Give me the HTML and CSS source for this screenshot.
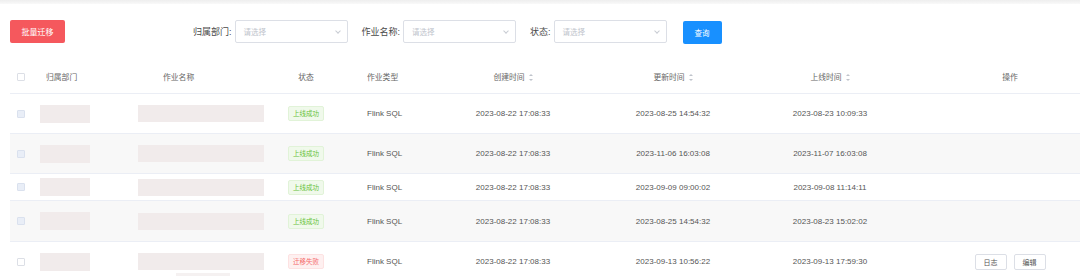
FILE: index.html
```html
<!DOCTYPE html>
<html lang="zh-CN">
<head>
  <meta charset="UTF-8" />
  <title>作业迁移</title>
  <link rel="stylesheet" href="styles.css">
</head>
<body>

  <div class="topbar"></div>

  <div class="toolbar">
    <button class="btn-danger">批量迁移</button>

    <div class="filters">
      <label class="filter-label">归属部门:</label>
      <div class="select"><span>请选择</span><i class="chevron"></i></div>

      <label class="filter-label">作业名称:</label>
      <div class="select"><span>请选择</span><i class="chevron"></i></div>

      <label class="filter-label">状态:</label>
      <div class="select"><span>请选择</span><i class="chevron"></i></div>

      <button class="btn-primary">查询</button>
    </div>
  </div>

  <div class="table">
    <div class="row head">
      <div class="cell"><span class="checkbox"></span></div>
      <div class="cell c-dept">归属部门</div>
      <div class="cell c-name">作业名称</div>
      <div class="cell center">状态</div>
      <div class="cell c-type">作业类型</div>
      <div class="cell center">创建时间<i class="sort"></i></div>
      <div class="cell center">更新时间<i class="sort"></i></div>
      <div class="cell center">上线时间<i class="sort"></i></div>
      <div class="cell c-op">操作</div>
    </div>

    <div class="row">
      <div class="cell"><span class="checkbox filled"></span></div>
      <div class="cell"><div class="ph-dept"></div></div>
      <div class="cell c-name-data"><div class="ph-name"></div></div>
      <div class="cell center"><span class="tag ok">上线成功</span></div>
      <div class="cell c-type">Flink SQL</div>
      <div class="cell center">2023-08-22 17:08:33</div>
      <div class="cell center">2023-08-25 14:54:32</div>
      <div class="cell center">2023-08-23 10:09:33</div>
      <div class="cell c-op"></div>
    </div>

    <div class="row stripe">
      <div class="cell"><span class="checkbox filled"></span></div>
      <div class="cell"><div class="ph-dept"></div></div>
      <div class="cell c-name-data"><div class="ph-name"></div></div>
      <div class="cell center"><span class="tag ok">上线成功</span></div>
      <div class="cell c-type">Flink SQL</div>
      <div class="cell center">2023-08-22 17:08:33</div>
      <div class="cell center">2023-11-06 16:03:08</div>
      <div class="cell center">2023-11-07 16:03:08</div>
      <div class="cell c-op"></div>
    </div>

    <div class="row short">
      <div class="cell"><span class="checkbox filled"></span></div>
      <div class="cell"><div class="ph-dept"></div></div>
      <div class="cell c-name-data"><div class="ph-name"></div></div>
      <div class="cell center"><span class="tag ok">上线成功</span></div>
      <div class="cell c-type">Flink SQL</div>
      <div class="cell center">2023-08-22 17:08:33</div>
      <div class="cell center">2023-09-09 09:00:02</div>
      <div class="cell center">2023-09-08 11:14:11</div>
      <div class="cell c-op"></div>
    </div>

    <div class="row stripe tall">
      <div class="cell"><span class="checkbox filled"></span></div>
      <div class="cell"><div class="ph-dept"></div></div>
      <div class="cell c-name-data"><div class="ph-name"></div></div>
      <div class="cell center"><span class="tag ok">上线成功</span></div>
      <div class="cell c-type">Flink SQL</div>
      <div class="cell center">2023-08-22 17:08:33</div>
      <div class="cell center">2023-08-25 14:54:32</div>
      <div class="cell center">2023-08-23 15:02:02</div>
      <div class="cell c-op"></div>
    </div>

    <div class="row">
      <div class="cell"><span class="checkbox"></span></div>
      <div class="cell"><div class="ph-dept"></div></div>
      <div class="cell c-name-data top">
        <div class="ph-name"></div>
        <div class="ph-sub"></div>
      </div>
      <div class="cell center"><span class="tag fail">迁移失败</span></div>
      <div class="cell c-type">Flink SQL</div>
      <div class="cell center">2023-08-22 17:08:33</div>
      <div class="cell center">2023-09-13 10:56:22</div>
      <div class="cell center">2023-09-13 17:59:30</div>
      <div class="cell c-op">
        <button class="btn-small">日志</button>
        <button class="btn-small">编辑</button>
      </div>
    </div>
  </div>

</body>
</html>
```

FILE: styles.css
```css
body {
  margin: 0;
  font-family: 'Liberation Sans', 'Noto Sans CJK SC', sans-serif;
  background-color: #fff;
  color: #555;
}

.topbar {
  height: 4px;
  background: linear-gradient(#eeeeee, #f9f9f9);
}

.toolbar {
  display: flex;
  align-items: center;
  padding: 15px 0 0 10px;
}

button {
  font-family: inherit;
  border: none;
  cursor: pointer;
  padding: 0;
}

.btn-danger {
  width: 55px;
  height: 23px;
  background-color: #f5585d;
  color: white;
  font-size: 8px;
  border-radius: 2px;
}

.btn-primary {
  width: 39px;
  height: 23px;
  margin-top: 2px;
  margin-left: 16px;
  background-color: #1890ff;
  color: white;
  font-size: 7.5px;
  border-radius: 2px;
}

.filters {
  display: flex;
  align-items: center;
  margin-left: 128px;
}

.filter-label {
  font-size: 9px;
  color: #4a4a4a;
  margin-right: 3px;
}

.select {
  width: 113px;
  height: 23px;
  box-sizing: border-box;
  border: 1px solid #dcdfe6;
  border-radius: 2px;
  display: flex;
  align-items: center;
  justify-content: space-between;
  padding: 0 7px 0 8px;
  margin-right: 14px;
  font-size: 7.5px;
  color: #c0c4cc;
}

.select:last-of-type {
  margin-right: 0;
}

.chevron {
  width: 3px;
  height: 3px;
  border-right: 1px solid #c8ccd3;
  border-bottom: 1px solid #c8ccd3;
  transform: rotate(45deg);
  margin-top: -2px;
}

/* Table */
.table {
  margin: 13px 0 0 10px;
  width: 1070px;
}

.row {
  display: grid;
  grid-template-columns: 22px 98px 142px 68px 90px 166px 154px 160px 170px;
  align-items: center;
  height: 40px;
  box-sizing: border-box;
  border-bottom: 1px solid #ebeef5;
  font-size: 8px;
  color: #555;
}

.row.head {
  height: 37px;
  padding-top: 3px;
  font-size: 7.8px;
  color: #666;
}

.row.stripe {
  background-color: #f8f8f8;
}

.row.short {
  height: 27px;
}

.row.tall {
  height: 41px;
}

.cell {
  white-space: nowrap;
}

.center {
  text-align: center;
}

.cell:first-child {
  padding-left: 7px;
}

.c-dept {
  padding-left: 14px;
}

.c-name {
  padding-left: 33px;
}

.c-name-data {
  padding-left: 8px;
}

.c-name-data.top {
  align-self: start;
  padding-top: 11px;
}

.c-type {
  padding-left: 27px;
}

.c-op {
  display: flex;
  justify-content: center;
  gap: 7px;
  padding-left: 30px;
}

.checkbox {
  display: block;
  width: 8px;
  height: 8px;
  box-sizing: border-box;
  border: 1px solid #dcdfe6;
  border-radius: 1px;
  background: #fff;
}

.checkbox.filled {
  background: #e9eef7;
  border-color: #dae1ee;
}

.ph-dept {
  width: 50px;
  height: 18px;
  margin-left: 8px;
  background-color: #f1ebeb;
}

.ph-name {
  width: 126px;
  height: 17px;
  background-color: #f1ebeb;
}

.ph-sub {
  width: 54px;
  height: 12px;
  margin: 3px 0 -10px 38px;
  background-color: #f5f1f1;
}

.tag {
  display: inline-block;
  width: 36px;
  height: 15px;
  line-height: 13px;
  box-sizing: border-box;
  border-radius: 2px;
  font-size: 6.5px;
  text-align: center;
}

.tag.ok {
  background-color: #f0f9eb;
  border: 1px solid #e1f3d8;
  color: #67c23a;
}

.tag.fail {
  background-color: #fef0f0;
  border: 1px solid #fde2e2;
  color: #f56c6c;
}

.sort {
  display: inline-block;
  position: relative;
  width: 4px;
  height: 7px;
  margin-left: 4px;
  vertical-align: -1px;
}

.sort::before,
.sort::after {
  content: "";
  position: absolute;
  left: 0;
  border-left: 2px solid transparent;
  border-right: 2px solid transparent;
}

.sort::before {
  top: 0;
  border-bottom: 2.5px solid #c0c4cc;
}

.sort::after {
  bottom: 0;
  border-top: 2.5px solid #c0c4cc;
}

.btn-small {
  width: 32px;
  height: 16px;
  box-sizing: border-box;
  background: #fff;
  border: 1px solid #dcdfe6;
  border-radius: 2px;
  font-size: 7px;
  color: #555;
}
```
